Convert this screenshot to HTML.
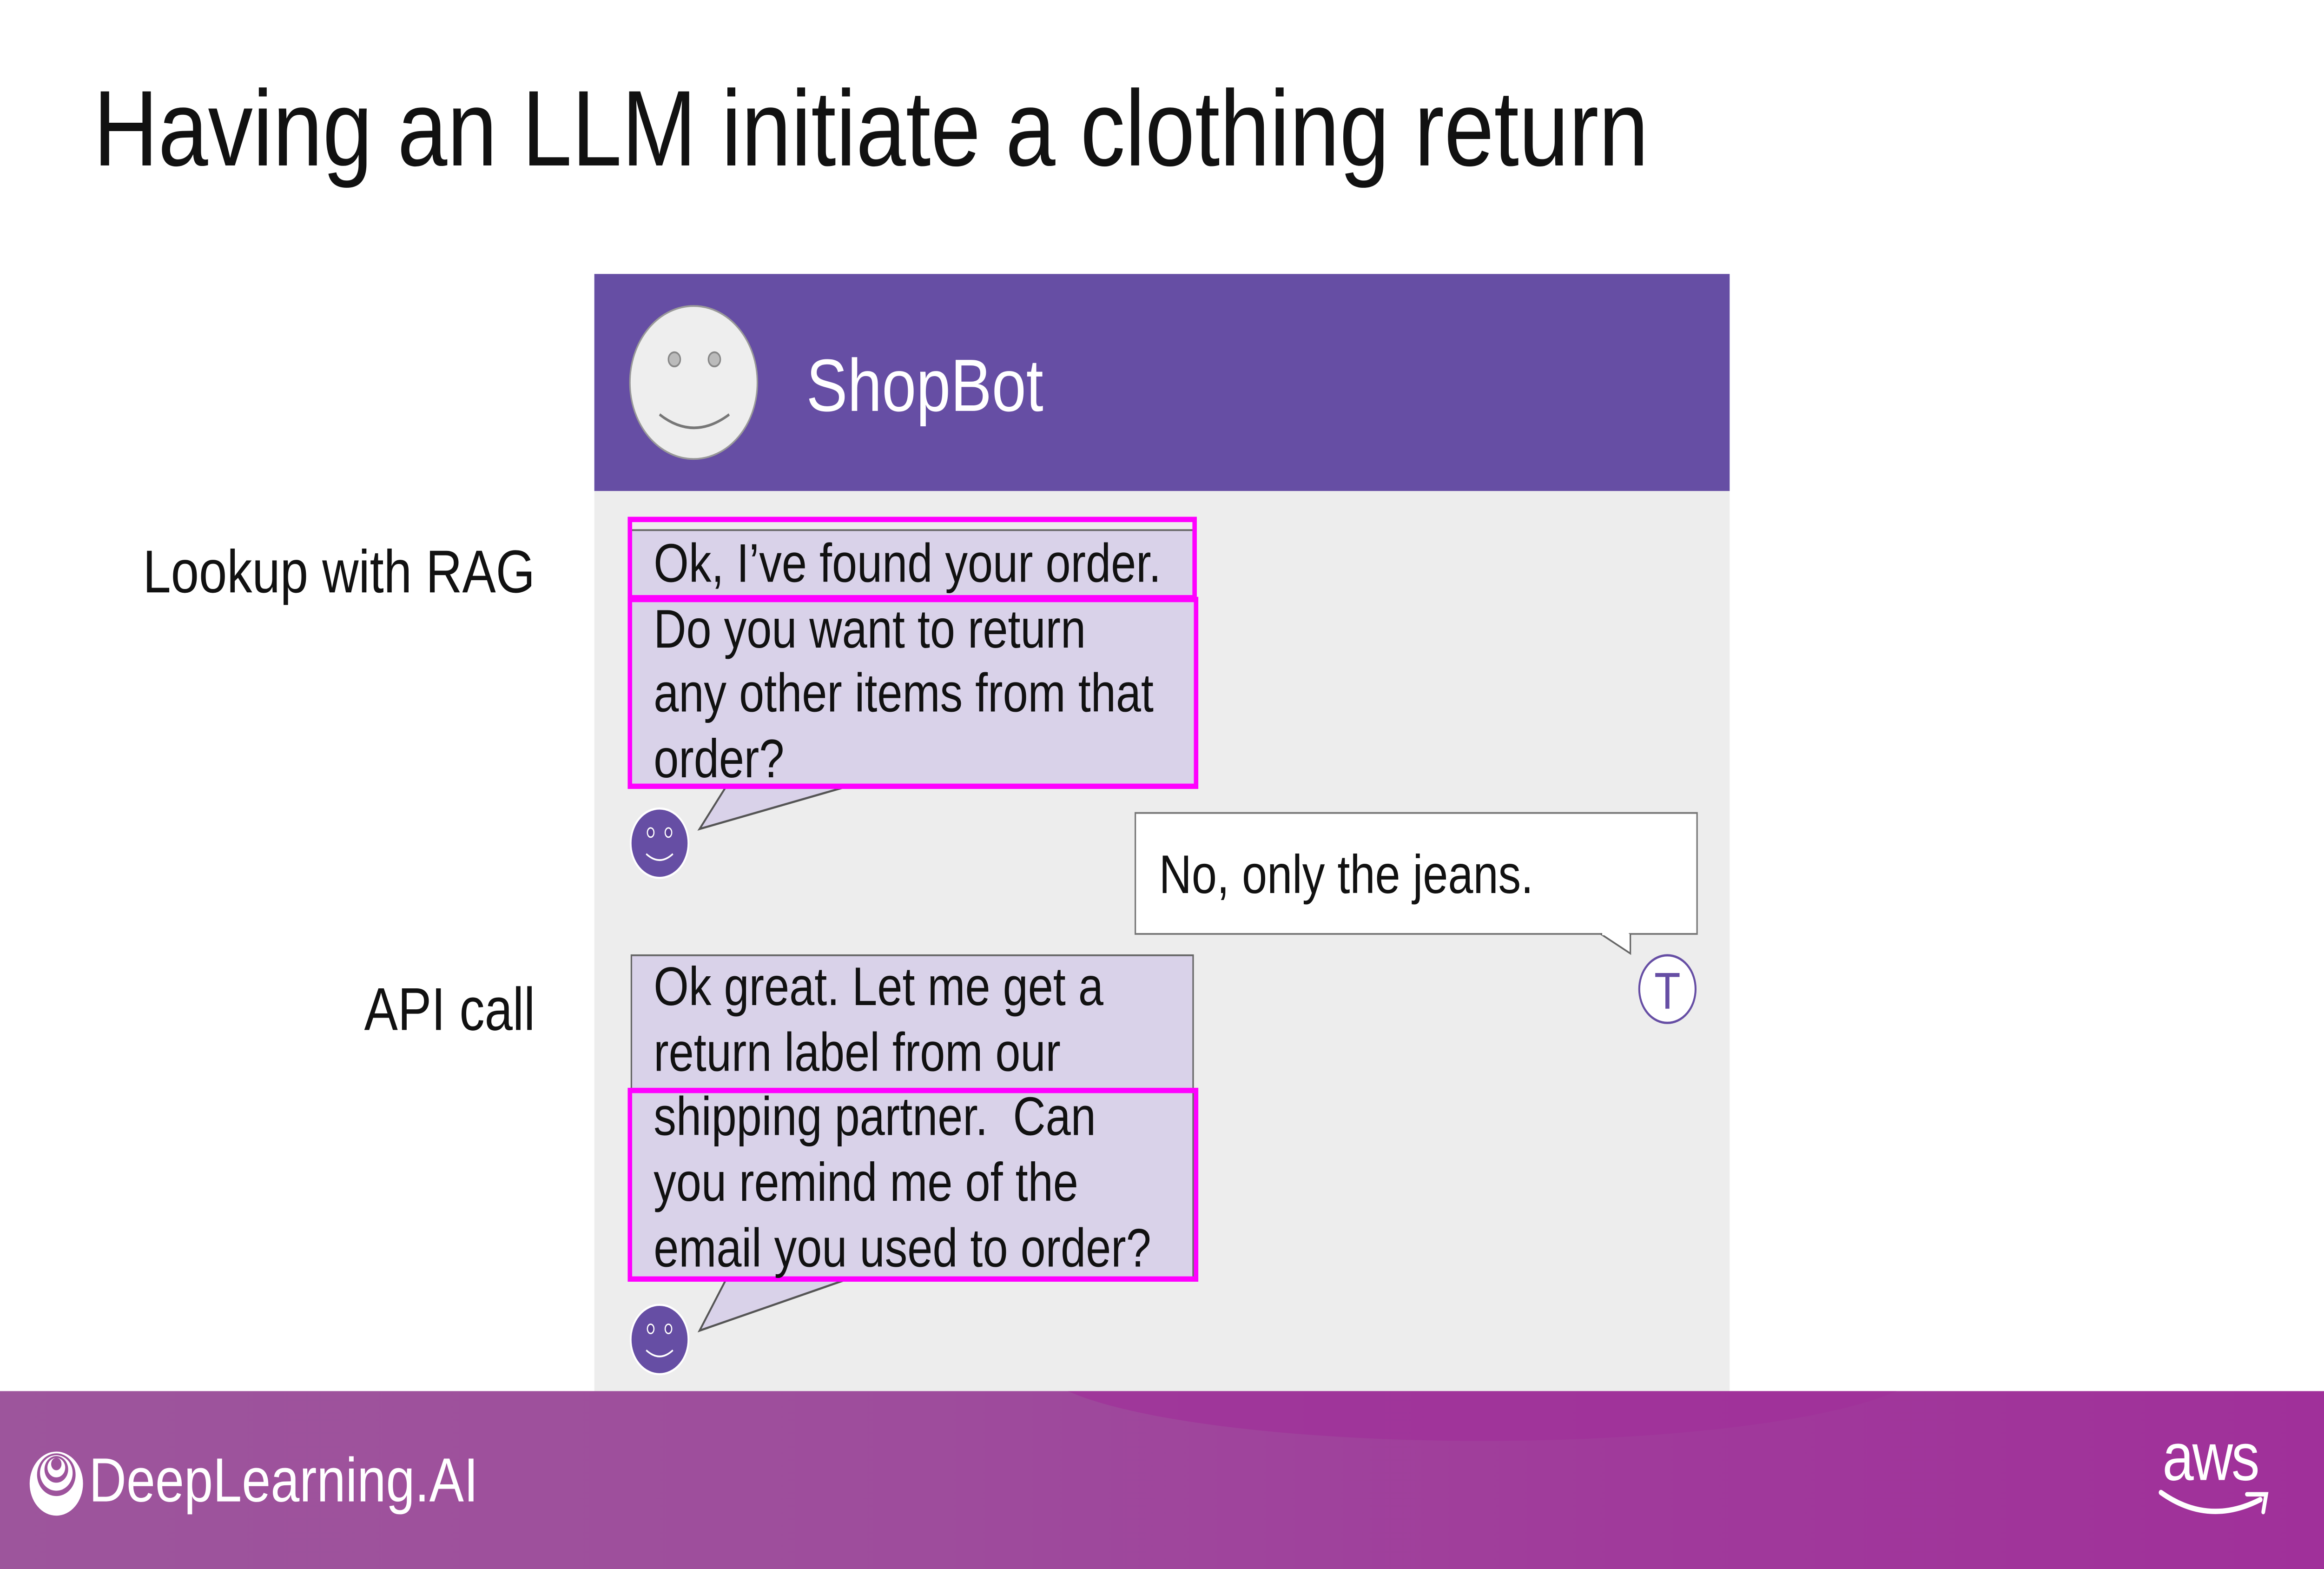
<!DOCTYPE html>
<html><head><meta charset="utf-8"><style>
html,body{margin:0;padding:0;background:#fff;overflow:hidden}
#w{position:absolute;left:0;top:0;width:1568px;height:882px;transform:scale(3.1888);transform-origin:0 0;font-family:"Liberation Sans",Arial,sans-serif;background:#fff}
.a{position:absolute;white-space:nowrap}
.t{font-size:30.5px;color:#111;line-height:36.7px}
</style></head><body><div id="w">
<div class="a" style="left:63px;top:37px;font-size:60.5px;color:#111">Having an LLM initiate a clothing return</div>
<div class="a" style="right:1207px;top:303px;font-size:34px;color:#111">Lookup with RAG</div>
<div class="a" style="right:1207px;top:549px;font-size:34px;color:#111">API call</div>

<div class="a" style="left:401px;top:154px;width:766px;height:628px;background:#ededed"></div>
<div class="a" style="left:401px;top:154px;width:766px;height:122px;background:#664ea4"></div>
<svg class="a" style="left:0;top:0" width="1568" height="882">
<circle cx="468" cy="215" r="43" fill="#eeeeee" stroke="#999" stroke-width="1"/>
<circle cx="455" cy="202" r="4" fill="#bbb" stroke="#888"/>
<circle cx="482" cy="202" r="4" fill="#bbb" stroke="#888"/>
<path d="M445 233 Q468 248 492 233" fill="none" stroke="#777" stroke-width="1.5"/>
<rect x="425" y="298" width="381" height="144" fill="#d9d2e9" stroke="#666" stroke-width="1"/>
<path d="M490 442 L472 466 L572 442 Z" fill="#d9d2e9" stroke="#555" stroke-width="1.2"/>
<rect x="425" y="292" width="381" height="44" fill="none" stroke="#ff00ff" stroke-width="3"/>
<rect x="425" y="337" width="382" height="105" fill="none" stroke="#ff00ff" stroke-width="3"/>
<g id="av"><circle cx="445" cy="474" r="19.5" fill="#664ea4" stroke="#fff" stroke-width="1.2"/>
<ellipse cx="439" cy="468" rx="2.2" ry="2.6" fill="#5a3f96" stroke="#fff" stroke-width="0.8"/>
<ellipse cx="451" cy="468" rx="2.2" ry="2.6" fill="#5a3f96" stroke="#fff" stroke-width="0.8"/>
<path d="M436 480 Q445 487 454 480" fill="none" stroke="#fff" stroke-width="1"/></g>
<rect x="766" y="457" width="379" height="68" fill="#fff" stroke="#777" stroke-width="1"/>
<path d="M1080 525 L1100 536 L1100 525" fill="#fff" stroke="#666" stroke-width="1"/>
<line x1="1081" y1="525" x2="1099" y2="525" stroke="#fff" stroke-width="1.5"/>
<circle cx="1125" cy="556" r="19" fill="#fff" stroke="#664ea4" stroke-width="1.3"/>
<text x="1125" y="567" font-size="29" fill="#664ea4" text-anchor="middle" font-family="Liberation Sans,sans-serif">T</text>
<rect x="426" y="537" width="379" height="182" fill="#d9d2e9" stroke="#666" stroke-width="1"/>
<path d="M490 719 L472 748 L572 719 Z" fill="#d9d2e9" stroke="#555" stroke-width="1.2"/>
<rect x="425" y="613" width="382" height="106" fill="none" stroke="#ff00ff" stroke-width="3"/>
<use href="#av" transform="translate(0,279)"/>
</svg>
<div class="a" style="left:544px;top:193px;font-size:41.7px;color:#fff">ShopBot</div>
<div class="a t" style="left:441px;top:299px">Ok, I’ve found your order.<br>Do you want to return<br>any other items from that<br>order?</div>
<div class="a t" style="left:782px;top:474px">No, only the jeans.</div>
<div class="a t" style="left:441px;top:537px">Ok great. Let me get a<br>return label from our<br>shipping partner.&nbsp; Can<br>you remind me of the<br>email you used to order?</div>

<div class="a" style="left:0;top:782px;width:1568px;height:100px;background:linear-gradient(90deg,#9d559c 0%,#9e4c9c 40%,#a03a9b 70%,#a0309a 100%);overflow:hidden">
<div class="a" style="left:700px;top:-60px;width:600px;height:88px;border-radius:50%;background:#a0309a;opacity:.7"></div>
</div>
<svg class="a" style="left:18px;top:814px" width="40" height="40" viewBox="0 0 40 40">
<ellipse cx="20" cy="20" rx="18" ry="18" fill="#fff"/>
<ellipse cx="20" cy="15" rx="13" ry="12" fill="#9d539c"/>
<ellipse cx="20" cy="14" rx="11" ry="10" fill="#fff"/>
<ellipse cx="20" cy="12" rx="8" ry="7.5" fill="#9d539c"/>
<ellipse cx="20" cy="11" rx="6" ry="5.5" fill="#fff"/>
<ellipse cx="20" cy="9" rx="3.5" ry="3.5" fill="#9d539c"/>
</svg>
<div class="a" style="left:60px;top:813px;font-size:35px;color:#fff">DeepLearning.AI</div>
<div class="a" style="left:1459px;top:799px;font-size:38px;color:#fff;letter-spacing:-1px">aws</div>
<svg class="a" style="left:1455px;top:832px" width="80" height="26"><path d="M3 7 Q35 26 70 11" fill="none" stroke="#fff" stroke-width="3" stroke-linecap="round"/><path d="M61 8 L74 8 L72 18" fill="none" stroke="#fff" stroke-width="2.5" stroke-linecap="round"/></svg>
</div>
<script>
(function(){var w=document.getElementById('w');var sx=window.innerWidth/1568,sy=window.innerHeight/882;if(sx>0&&sy>0)w.style.transform='scale('+sx+','+sy+')';})();
</script>
</body></html>
